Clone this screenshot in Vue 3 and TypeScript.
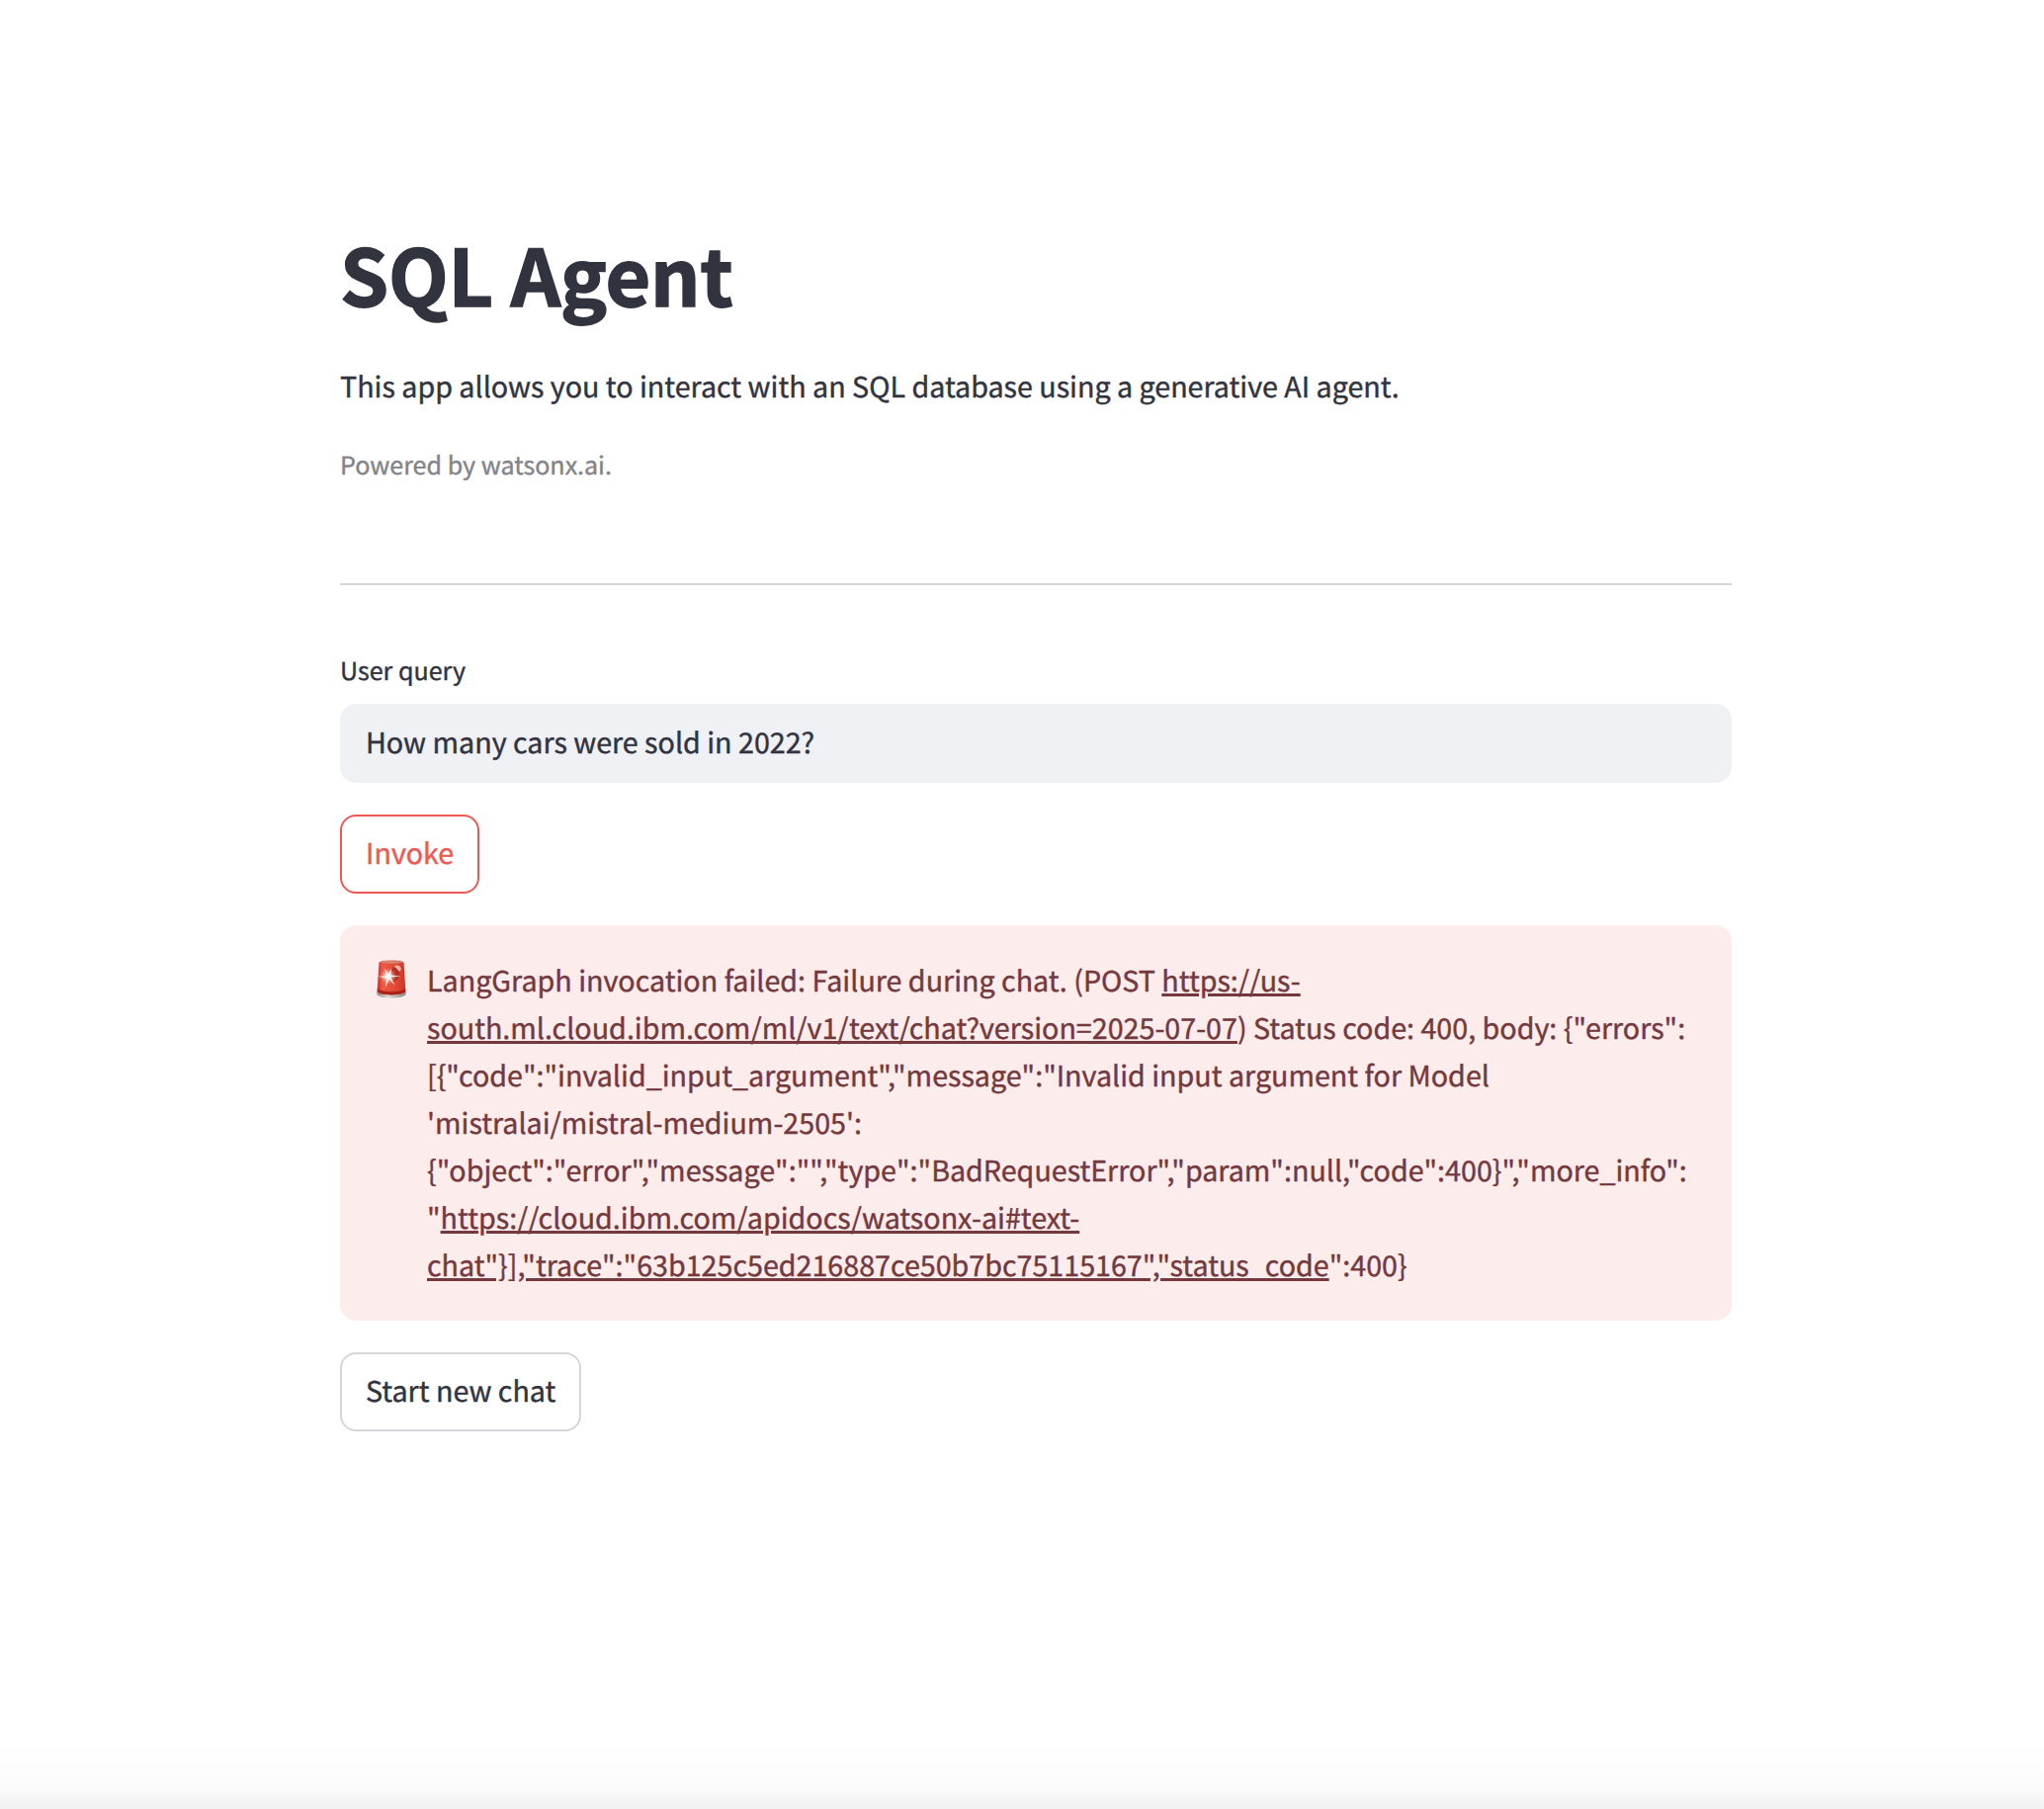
<script setup lang="ts">
import { ref } from 'vue'

interface Piece {
  text: string
  link?: boolean
}

const query = ref<string>('How many cars were sold in 2022?')

const errorLines: Piece[][] = [
  [{ text: 'LangGraph invocation failed: Failure during chat. (POST ' }, { text: 'https://us-', link: true }],
  [
    { text: 'south.ml.cloud.ibm.com/ml/v1/text/chat?version=2025-07-07', link: true },
    { text: ') Status code: 400, body: {"errors":' },
  ],
  [{ text: '[{"code":"invalid_input_argument","message":"Invalid input argument for Model' }],
  [{ text: "'mistralai/mistral-medium-2505':" }],
  [{ text: '{"object":"error","message":"","type":"BadRequestError","param":null,"code":400}","more_info":' }],
  [{ text: '"' }, { text: 'https://cloud.ibm.com/apidocs/watsonx-ai#text-', link: true }],
  [
    { text: 'chat"}],"trace":"63b125c5ed216887ce50b7bc75115167","status_code', link: true },
    { text: '":400}' },
  ],
]
</script>

<template>
  <div class="page">
    <main class="column">
      <h1 class="title">SQL Agent</h1>
      <p class="intro">This app allows you to interact with an SQL database using a generative AI agent.</p>
      <p class="caption">Powered by watsonx.ai.</p>
      <hr class="divider" />
      <label class="label" for="query">User query</label>
      <input id="query" v-model="query" class="field" type="text" />
      <button class="button primary" type="button">Invoke</button>
      <section class="alert" role="alert">
        <svg class="siren" viewBox="0 0 30 39" width="30" height="39" aria-hidden="true">
          <defs>
            <linearGradient id="dome" x1="0" x2="1" y1="0" y2="0">
              <stop offset="0" stop-color="#c9362a" />
              <stop offset="0.2" stop-color="#ee5a43" />
              <stop offset="0.75" stop-color="#df4330" />
              <stop offset="1" stop-color="#c93427" />
            </linearGradient>
            <linearGradient id="base" x1="0" x2="1" y1="0" y2="0">
              <stop offset="0" stop-color="#8d8884" />
              <stop offset="0.4" stop-color="#dedbd8" />
              <stop offset="1" stop-color="#858280" />
            </linearGradient>
            <radialGradient id="glow">
              <stop offset="0" stop-color="#ffffff" />
              <stop offset="0.35" stop-color="#ffd9cf" stop-opacity="0.85" />
              <stop offset="1" stop-color="#ff8a70" stop-opacity="0" />
            </radialGradient>
          </defs>
          <path d="M.3 31.5h29.4v2.6c0 2.9-6.4 4.7-14.7 4.7S.3 37 .3 34.1Z" fill="url(#base)" />
          <path d="M2.400 3.200C2.600 1.300 7.500.600 15 .600s12.400.700 12.600 2.600L29.300 31c.100 2.600-6 4.400-14.300 4.400S.600 33.600.700 31Z" fill="url(#dome)" />
          <path d="M.9 28.600c2 2.600 7.500 3.600 14.100 3.600s12-1 14.100-3.600l.2 2.400c.1 2.600-6 4.400-14.300 4.400S.6 33.600.7 31Z" fill="#a92318" />
          <ellipse cx="15" cy="2.300" rx="11.600" ry="1.300" fill="#c98d7c" />
          <path d="M13 9.500c3-2.500 6-2.600 8 0l2.500 4.500-2 6-5.500 2.500-4-3Z" fill="#9d2d24" opacity="0.75" />
          <path d="M17.500 6.500c3-2 6-1.200 7.200 2 .5 1.800-.7 3.200-2.300 2.700-1.200-2.100-2.800-3.600-4.900-4.700Z" fill="#eeb6ae" />
          <circle cx="11.500" cy="16.500" r="8.500" fill="url(#glow)" />
          <path d="m11.500 16.500-4.300-8.700 5.200 6.700 2.900-7.300-1 8.300 10.200 1.100-10 1 4 8.300-5.700-6.700-3.700 8.500.8-9-8.500-2Z" fill="#fff2ee" />
          <circle cx="11.700" cy="16.500" r="2.600" fill="#fff" />
        </svg>
        <div class="message">
          <div v-for="(line, i) in errorLines" :key="i" class="line">
            <template v-for="(piece, j) in line" :key="j"><a v-if="piece.link" class="link">{{ piece.text }}</a><span v-else>{{ piece.text }}</span></template>
          </div>
        </div>
      </section>
      <button class="button" type="button">Start new chat</button>
    </main>
    <div class="bottom-fade"></div>
  </div>
</template>

<style>
body {
  background: #fff;
}
</style>

<style scoped>
.page {
  box-sizing: border-box;
  width: 2068px;
  height: 1830px;
  display: flex;
  flex-direction: column;
  justify-content: space-between;
  overflow: hidden;
  color: #31333f;
  font-family: 'Noto Sans CJK SC', 'Noto Sans CJK JP', sans-serif;
  font-size: 28.67px;
  line-height: 48px;
  text-rendering: geometricPrecision;
  -webkit-text-stroke-width: 0.4px;
}

.column {
  width: 1408px;
  margin-left: 344px;
  padding-top: 223px;
  display: flex;
  flex-direction: column;
  align-items: flex-start;
}

.title {
  margin: 0;
  font-size: 78.8px;
  font-weight: 700;
  line-height: 106px;
  letter-spacing: -0.15px;
  white-space: nowrap;
  -webkit-text-stroke-width: 1.6px;
}

.intro {
  margin: 38px 0 0;
  white-space: nowrap;
}

.caption {
  margin: 34px 0 0;
  font-size: 25.07px;
  line-height: 42px;
  color: #83848b;
}

.divider {
  width: 100%;
  height: 2px;
  margin: 99px 0 0;
  border: 0;
  background: #d5d6d8;
}

.label {
  margin-top: 65px;
  font-size: 25.07px;
  line-height: 42px;
}

.field {
  box-sizing: border-box;
  width: 100%;
  height: 80px;
  margin-top: 13px;
  padding: 0 26px 3px;
  border: 0;
  border-radius: 16px;
  outline: none;
  background: #f0f1f5;
  color: inherit;
  font: inherit;
  text-rendering: inherit;
}

.button {
  box-sizing: border-box;
  height: 80px;
  margin: 32px 0 0;
  padding: 0 24px 2px;
  border: 2px solid #d5d6d8;
  border-radius: 16px;
  background: #fff;
  color: inherit;
  font: inherit;
  text-rendering: inherit;
  white-space: nowrap;
}

.primary {
  border-color: #ec5953;
  color: #ec5953;
}

.alert {
  box-sizing: border-box;
  width: 100%;
  height: 400px;
  margin-top: 32px;
  padding: 32px 32px 31px;
  border-radius: 16px;
  background: #fdecec;
  color: #74393d;
  display: flex;
  align-items: flex-start;
}

.siren {
  flex: none;
  margin: 3px 21px 0 5px;
}

.message {
  flex: 1;
}

.line {
  height: 48px;
  white-space: nowrap;
}

.link {
  color: inherit;
  text-decoration: underline;
  text-decoration-thickness: 3px;
  text-underline-offset: 2px;
}

.bottom-fade {
  height: 70px;
  background: linear-gradient(to bottom, rgba(0, 0, 0, 0) 0%, rgba(0, 0, 0, 0.009) 45%, rgba(0, 0, 0, 0.024) 75%, rgba(0, 0, 0, 0.055) 100%);
}
</style>
